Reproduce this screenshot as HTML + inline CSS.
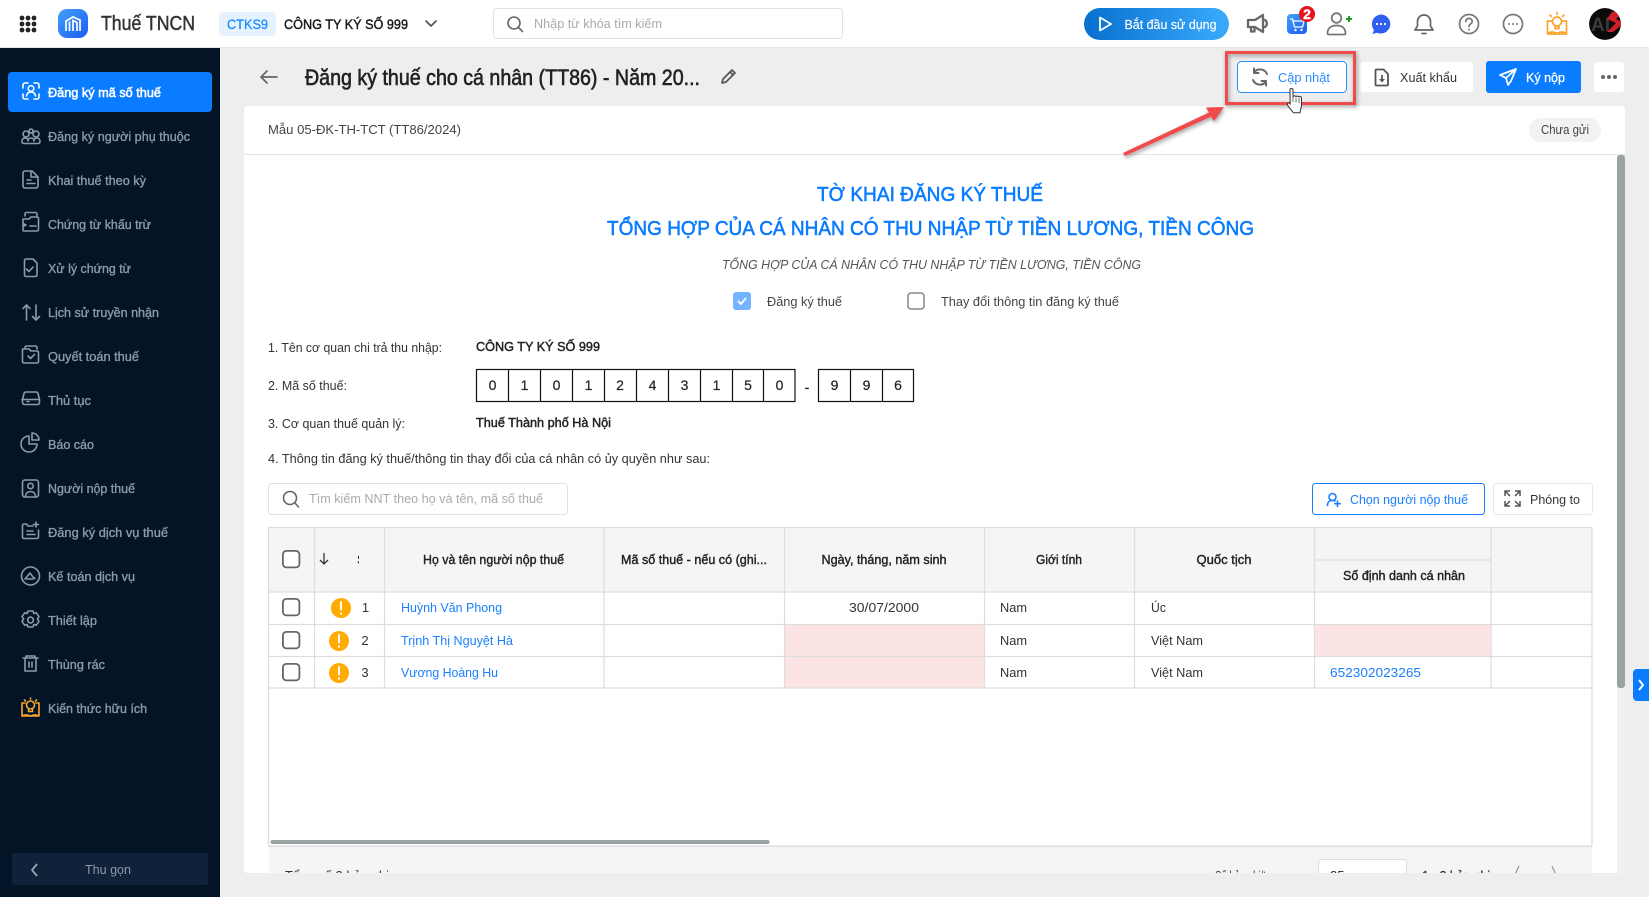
<!DOCTYPE html>
<html lang="vi">
<head>
<meta charset="utf-8">
<title>Đăng ký thuế</title>
<style>
html,body{margin:0;padding:0;width:1649px;height:897px;overflow:hidden;background:#eee}
svg{display:block;position:absolute;left:0;top:0;filter:blur(.3px)}
text{font-family:"Liberation Sans",sans-serif;font-size:13px;white-space:pre}
.s text{fill:#8f99a8;stroke:#8f99a8;stroke-width:.35px}
.i{fill:none;stroke:#8f99a8;stroke-width:1.6;stroke-linecap:round;stroke-linejoin:round}
.h text{fill:#222;stroke:#222;stroke-width:.4px}
.d text{fill:#333}
.l text{fill:#1a7fff}
.b{fill:none;stroke:#ddd;stroke-width:1.2}
.n text{font-size:14px;fill:#222;text-anchor:middle;stroke:#222;stroke-width:.2px}
.n rect{fill:none;stroke:#111;stroke-width:1.2}
.cb{fill:#fff;stroke:#666;stroke-width:1.8}
.sh{filter:drop-shadow(1px 2px 2px rgba(0,0,0,.4))}
</style>
</head>
<body>
<svg width="1649" height="897" viewBox="0 0 1649 897" xmlns="http://www.w3.org/2000/svg">
<defs>
<linearGradient id="gs" x1="0" x2="1" y1="0" y2="0"><stop offset="0" stop-color="#0870cf"/><stop offset="1" stop-color="#3aaafc"/></linearGradient>
<linearGradient id="gl" x1="0" x2="1" y1="0" y2="1"><stop offset="0" stop-color="#42a0f8"/><stop offset="1" stop-color="#1a5cf5"/></linearGradient>
<clipPath id="cf"><rect x="244" y="846" width="1381" height="27"/></clipPath>
<clipPath id="cS"><rect x="345" y="540" width="14" height="40"/></clipPath>
<clipPath id="cA"><circle cx="1605" cy="24" r="16"/></clipPath>
</defs>

<rect width="1649" height="897" fill="#eee"/>

<!-- top bar -->
<rect width="1649" height="47" fill="#fff"/>
<rect y="47" width="1649" height="1" fill="#e6e6e6"/>
<g fill="#222">
<circle cx="22" cy="18" r="2.4"/><circle cx="28" cy="18" r="2.4"/><circle cx="34" cy="18" r="2.4"/>
<circle cx="22" cy="24" r="2.4"/><circle cx="28" cy="24" r="2.4"/><circle cx="34" cy="24" r="2.4"/>
<circle cx="22" cy="30" r="2.4"/><circle cx="28" cy="30" r="2.4"/><circle cx="34" cy="30" r="2.4"/>
</g>
<rect x="58" y="9" width="30" height="29" rx="9" fill="url(#gl)"/>
<path d="M66 31V21l7-4 7 3v11M69.500 31V21.500M73 31V20.500l4 2V31" fill="none" stroke="#fff" stroke-width="1.700"/>
<text x="101" y="30" textLength="94" lengthAdjust="spacingAndGlyphs" fill="#333" stroke="#333" stroke-width=".45" style="font-size:20px">Thuế TNCN</text>
<rect x="219" y="12" width="57" height="24" rx="4" fill="#e6f2fd"/>
<text x="227" y="29" textLength="41" lengthAdjust="spacingAndGlyphs" fill="#1a8cff" stroke="#1a8cff" stroke-width=".3" style="font-size:14px">CTKS9</text>
<text x="284" y="29" textLength="124" lengthAdjust="spacingAndGlyphs" fill="#1a1a1a" stroke="#1a1a1a" stroke-width=".45" style="font-size:14px">CÔNG TY KÝ SỐ 999</text>
<path d="M426 21l5 5 5-5" fill="none" stroke="#555" stroke-width="1.700" stroke-linecap="round" stroke-linejoin="round"/>
<rect x="493.500" y="8.500" width="349" height="30" rx="3" fill="#fff" stroke="#e2e2e2"/>
<circle cx="514" cy="23" r="6" fill="none" stroke="#666" stroke-width="1.600"/><path d="M518.500 27.500l4 4" stroke="#666" stroke-width="1.600" stroke-linecap="round"/>
<text x="534" y="28" textLength="128" lengthAdjust="spacingAndGlyphs" fill="#aaa">Nhập từ khóa tìm kiếm</text>

<rect x="1084" y="8" width="145" height="32" rx="16" fill="url(#gs)"/>
<path d="M1100 17.500v13l11-6.500z" fill="none" stroke="#fff" stroke-width="1.800" stroke-linejoin="round"/>
<text x="1124.500" y="29" textLength="92" lengthAdjust="spacingAndGlyphs" fill="#fff" stroke="#fff" stroke-width=".15">Bắt đầu sử dụng</text>

<!-- megaphone -->
<path d="M1248 20h7l8-5v17l-8-5h-7zM1251 27v4.500h3.500V27M1265 20c2.500 1.500 2.500 5.500 0 7" fill="none" stroke="#666" stroke-width="2.300" stroke-linejoin="round" stroke-linecap="round"/>
<!-- cart -->
<rect x="1287" y="14" width="20" height="20" rx="4" fill="url(#gl)"/>
<path d="M1290 19h2.500l2 8h8l1.500-6h-11" fill="none" stroke="#fff" stroke-width="1.300"/><circle cx="1295.500" cy="30" r="1.200" fill="#fff"/><circle cx="1301.500" cy="30" r="1.200" fill="#fff"/>
<circle cx="1307" cy="14" r="8" fill="#e8121f"/>
<text x="1307" y="19" text-anchor="middle" fill="#fff" stroke="#fff" stroke-width=".4" style="font-size:14px;font-weight:bold">2</text>
<!-- add user -->
<circle cx="1336.500" cy="18" r="4.800" fill="none" stroke="#777" stroke-width="1.800"/>
<path d="M1327.500 33.500c0-5 3-8 9-8s9 3 9 8c0 .5-.5 1-1 1h-16c-.5 0-1-.5-1-1z" fill="none" stroke="#777" stroke-width="1.800"/>
<path d="M1346 19h6M1349 16v6" stroke="#1f9d1f" stroke-width="2"/>
<!-- chat -->
<path d="M1381 14.500a9.500 9.500 0 1 1-4 18.200l-4.500 1.300 1.500-4a9.500 9.500 0 0 1 7-15.500z" fill="#2f5ff0"/>
<circle cx="1377" cy="24" r="1.100" fill="#fff"/><circle cx="1381" cy="24" r="1.100" fill="#fff"/><circle cx="1385" cy="24" r="1.100" fill="#fff"/>
<!-- bell -->
<path d="M1424 15c-4.500 0-6.500 3.500-6.500 7v4l-2.500 4h18l-2.500-4v-4c0-3.500-2-7-6.500-7z" fill="none" stroke="#666" stroke-width="1.700" stroke-linejoin="round"/>
<path d="M1422 33.500h4" stroke="#666" stroke-width="1.700" stroke-linecap="round"/>
<!-- help -->
<circle cx="1469" cy="24" r="9.500" fill="none" stroke="#777" stroke-width="1.700"/>
<path d="M1465.800 21.500c0-4.200 6.400-4.200 6.400 0 0 2.500-3.200 2.500-3.200 5" fill="none" stroke="#777" stroke-width="1.700" stroke-linecap="round"/><circle cx="1469" cy="29.500" r="1" fill="#777"/>
<!-- dots -->
<circle cx="1513" cy="24" r="9.500" fill="none" stroke="#777" stroke-width="1.700"/>
<circle cx="1509" cy="24" r="1" fill="#777"/><circle cx="1513" cy="24" r="1" fill="#777"/><circle cx="1517" cy="24" r="1" fill="#777"/>
<!-- bulb -->
<g fill="none" stroke="#f9a52e" stroke-width="1.700" stroke-linecap="round" stroke-linejoin="round">
<circle cx="1557" cy="21.500" r="4.500"/><path d="M1555 26v2.500h4V26M1557 12.500v2M1550 15l1.500 1.500M1564 15l-1.500 1.500"/>
<path d="M1551.500 21h-4v13h19V21h-4M1547.500 33.500c3-2 6-2 9.500 0 3.500-2 6.500-2 9.500 0"/>
</g>
<!-- avatar -->
<g clip-path="url(#cA)">
<circle cx="1605" cy="24" r="16" fill="#0b0b0b"/>
<text x="1591" y="31" fill="#3a3a3a" style="font-size:19px;font-weight:bold">AI</text>
<path d="M1622 12h-10l-5 7 9 4-9 9h6l11-9-8-4 6-5z" fill="#d11f2a"/>
</g>

<!-- sidebar -->
<rect y="48" width="220" height="849" fill="#031426"/>
<rect x="8" y="72" width="204" height="40" rx="4" fill="#0a7cff"/>
<g fill="none" stroke="#fff" stroke-width="1.600" stroke-linecap="round">
<path d="M23 88v-3a2 2 0 0 1 2-2h3M34 83h3a2 2 0 0 1 2 2v3M39 94v3a2 2 0 0 1-2 2h-3M28 99h-3a2 2 0 0 1-2-2v-3"/>
<circle cx="31" cy="88.500" r="2.800"/><path d="M26.500 96c.5-3 2-4 4.500-4s4 1 4.500 4"/>
</g>
<text x="48" y="97" textLength="113" lengthAdjust="spacingAndGlyphs" fill="#fff" stroke="#fff" stroke-width=".55">Đăng ký mã số thuế</text>

<g class="s">
<text x="48" y="141" textLength="142" lengthAdjust="spacingAndGlyphs">Đăng ký người phụ thuộc</text>
<text x="48" y="185" textLength="98" lengthAdjust="spacingAndGlyphs">Khai thuế theo kỳ</text>
<text x="48" y="229" textLength="103" lengthAdjust="spacingAndGlyphs">Chứng từ khấu trừ</text>
<text x="48" y="273" textLength="83" lengthAdjust="spacingAndGlyphs">Xử lý chứng từ</text>
<text x="48" y="317" textLength="111" lengthAdjust="spacingAndGlyphs">Lịch sử truyền nhận</text>
<text x="48" y="361" textLength="91" lengthAdjust="spacingAndGlyphs">Quyết toán thuế</text>
<text x="48" y="405" textLength="43" lengthAdjust="spacingAndGlyphs">Thủ tục</text>
<text x="48" y="449" textLength="46" lengthAdjust="spacingAndGlyphs">Báo cáo</text>
<text x="48" y="493" textLength="87" lengthAdjust="spacingAndGlyphs">Người nộp thuế</text>
<text x="48" y="537" textLength="120" lengthAdjust="spacingAndGlyphs">Đăng ký dịch vụ thuế</text>
<text x="48" y="581" textLength="87" lengthAdjust="spacingAndGlyphs">Kế toán dịch vụ</text>
<text x="48" y="625" textLength="49" lengthAdjust="spacingAndGlyphs">Thiết lập</text>
<text x="48" y="669" textLength="57" lengthAdjust="spacingAndGlyphs">Thùng rác</text>
<text x="48" y="713" textLength="99" lengthAdjust="spacingAndGlyphs">Kiến thức hữu ích</text>
</g>
<g class="i">
<circle cx="26" cy="134" r="3"/><circle cx="36" cy="134" r="3"/><circle cx="31" cy="131" r="2"/><path d="M22 142c0-3 1-4 3-4s3 1 3 3c0-2 1-3 3-3s3 1 3 3c0-2 1-3 3-3s3 1 3 4c0 1-1 1.500-2 1.500H24c-1 0-2-.5-2-1.500z"/>
<path d="M25 171h7l6 6v9a2 2 0 0 1-2 2H25a2 2 0 0 1-2-2v-13a2 2 0 0 1 2-2zM27 180h4M27 183.500h8M31 172v5h6"/>
<path d="M25 216v-2a1.500 1.500 0 0 1 1.500-1.500h9a1.500 1.500 0 0 1 1.500 1.500v2M24 231h13a1.500 1.500 0 0 0 1.500-1.500v-11a1.500 1.500 0 0 0-1.500-1.500H31l-2 2h-6v11a1 1 0 0 0 1 1zM30 226h6M23 223.500l3 1.500-3 1.500"/>
<path d="M26 259h7l4 4v12a1.500 1.500 0 0 1-1.500 1.500h-9.500a1.500 1.500 0 0 1-1.500-1.500v-14.500a1.500 1.500 0 0 1 1.500-1.500zM26.500 269l2.500 2.500 4-4.500"/>
<path d="M26.500 320v-15M23 308.500l3.500-3.500 3.500 3.500M36 305v15M32.500 316.500l3.500 3.500 3.500-3.500"/>
<path d="M25 349v-1.500a1.500 1.500 0 0 1 1.500-1.500h9a1.500 1.500 0 0 1 1.500 1.500v1.500M24 363h13a1.500 1.500 0 0 0 1.500-1.500v-9a1.500 1.500 0 0 0-1.500-1.500H31l-2-2h-6.500v12.500a1.500 1.500 0 0 0 1.500 1.500zM28 356l2.500 2.500 4-4"/>
<path d="M27 392h9c1 0 1.700.5 2 1.500l1.500 6v3a2 2 0 0 1-2 2h-13a2 2 0 0 1-2-2v-3l1.500-6c.3-1 1-1.500 2-1.500zM22 399.500h17.500M27 401.500h2"/>
<path d="M37 444a8 8 0 1 1-8-8v8z"/><path d="M32 433a7 7 0 0 1 7 7h-7z"/>
<path d="M25 480h11a2.500 2.500 0 0 1 2.500 2.500v12a2.500 2.500 0 0 1-2.500 2.500H25a2.500 2.500 0 0 1-2.500-2.500v-12a2.500 2.500 0 0 1 2.500-2.500z"/><circle cx="30.500" cy="486" r="2.700"/><path d="M25.500 496c.5-3 2-4.500 5-4.500s4.500 1.500 5 4.500"/>
<path d="M33 526h-5l-1.500-2H24a1.500 1.500 0 0 0-1.500 1.500V537a1.500 1.500 0 0 0 1.500 1.500h13a1.500 1.500 0 0 0 1.500-1.500v-7M27 531h6M27 534.500h8M36 522v5M33.500 524.500h5"/>
<circle cx="30.500" cy="576" r="9"/><path d="M25 579l5-6 3 4 2 1.500M27 579h6"/>
<path d="M28 611h5l.8 2.500 2.400-.8 2.800 4-1.600 2.300 1.600 2.300-2.800 4-2.400-.8-.8 2.500h-5l-.8-2.500-2.400.8-2.800-4 1.600-2.300-1.600-2.300 2.800-4 2.400.8z"/><circle cx="30.500" cy="620" r="2.900"/>
<path d="M23 658h15M26 658v-2h9v2M25 658v13h11v-13M29 662v5M32 662v5"/>
</g>
<g fill="none" stroke="#f9a52e" stroke-width="1.600" stroke-linecap="round" stroke-linejoin="round">
<circle cx="30.500" cy="705" r="4"/><path d="M28.500 709.500v2h4v-2M30.500 698v1M24.500 700l1 1M36.500 700l-1 1"/>
<path d="M25 703h-3v13h17v-13h-3M22 716c3-1.500 5-1.500 8.500 0 3.500-1.500 5.500-1.500 8.500 0"/>
</g>
<rect x="12" y="853" width="196" height="32" rx="3" fill="#10213a"/>
<path d="M37 864l-5 6 5 6" fill="none" stroke="#9aa3af" stroke-width="1.800"/>
<text x="85" y="874" textLength="46" lengthAdjust="spacingAndGlyphs" fill="#8f99a8">Thu gọn</text>

<!-- page header -->
<path d="M277 77h-16M267 71l-6 6 6 6" fill="none" stroke="#666" stroke-width="1.700" stroke-linecap="round" stroke-linejoin="round"/>
<text x="305" y="85" textLength="395" lengthAdjust="spacingAndGlyphs" fill="#222" stroke="#222" stroke-width=".6" style="font-size:22px">Đăng ký thuế cho cá nhân (TT86) - Năm 20...</text>
<path d="M722 83l1-4 9-9 3 3-9 9zM730 72l3 3" fill="none" stroke="#555" stroke-width="1.700" stroke-linejoin="round"/>

<rect x="1237.500" y="61.500" width="109" height="31" rx="4" fill="#fff" stroke="#2b8cff"/>
<g fill="none" stroke="#666" stroke-width="2" stroke-linecap="round" stroke-linejoin="round">
<path d="M1267 74a7.500 7.500 0 0 0-13-1.500M1253 80a7.500 7.500 0 0 0 13 1.500"/><path d="M1254 68.500v4.500h4.500M1266 85.500V81h-4.500"/>
</g>
<text x="1278" y="82" textLength="52" lengthAdjust="spacingAndGlyphs" fill="#2b8cff">Cập nhật</text>

<rect x="1360.500" y="62" width="112.500" height="30" rx="3" fill="#fff"/>
<path d="M1376.500 69.500h7l4.500 4.500v10.500a1 1 0 0 1-1 1h-10.500a1 1 0 0 1-1-1V70.500a1 1 0 0 1 1-1z" fill="none" stroke="#555" stroke-width="1.800" stroke-linejoin="round"/>
<path d="M1382 75v5" stroke="#555" stroke-width="1.800" fill="none"/><path d="M1379 79h6l-3 3.500z" fill="#555"/>
<text x="1400" y="82" textLength="57" lengthAdjust="spacingAndGlyphs" fill="#333">Xuất khẩu</text>

<rect x="1486" y="61" width="95" height="32" rx="3" fill="#0a7cff"/>
<path d="M1516 69l-16 6 6 3 2 7 3-4zM1516 69l-10 9" fill="none" stroke="#fff" stroke-width="1.800" stroke-linejoin="round"/>
<text x="1526" y="82" textLength="39" lengthAdjust="spacingAndGlyphs" fill="#fff" stroke="#fff" stroke-width=".3">Ký nộp</text>

<rect x="1594" y="62" width="30" height="30" rx="3" fill="#fff"/>
<circle cx="1603" cy="77" r="2" fill="#666"/><circle cx="1609" cy="77" r="2" fill="#666"/><circle cx="1615" cy="77" r="2" fill="#666"/>

<!-- card -->
<rect x="244" y="106" width="1381" height="767" rx="4" fill="#fff"/>
<rect x="1617" y="155" width="8" height="718" fill="#f1f1f1"/>
<rect x="244" y="154" width="1381" height="1" fill="#e4e4e4"/>
<text x="268" y="134" textLength="193" lengthAdjust="spacingAndGlyphs" fill="#444">Mẫu 05-ĐK-TH-TCT (TT86/2024)</text>
<rect x="1529" y="118" width="72" height="24" rx="12" fill="#f2f2f2"/>
<text x="1541" y="134" textLength="48" lengthAdjust="spacingAndGlyphs" fill="#444">Chưa gửi</text>
<rect x="1617" y="155" width="8" height="533" rx="3" fill="#9aa3a3"/>

<text x="817" y="201" textLength="226" lengthAdjust="spacingAndGlyphs" fill="#0a7cff" stroke="#0a7cff" stroke-width=".55" style="font-size:20px">TỜ KHAI ĐĂNG KÝ THUẾ</text>
<text x="607" y="235" textLength="647" lengthAdjust="spacingAndGlyphs" fill="#0a7cff" stroke="#0a7cff" stroke-width=".55" style="font-size:20px">TỔNG HỢP CỦA CÁ NHÂN CÓ THU NHẬP TỪ TIỀN LƯƠNG, TIỀN CÔNG</text>
<text x="722" y="269" textLength="419" lengthAdjust="spacingAndGlyphs" fill="#555" style="font-style:italic">TỔNG HỢP CỦA CÁ NHÂN CÓ THU NHẬP TỪ TIỀN LƯƠNG, TIỀN CÔNG</text>

<rect x="733" y="292" width="18" height="18" rx="3" fill="#73b3ff"/>
<path d="M738 301l3 3 5-6" fill="none" stroke="#fff" stroke-width="1.800"/>
<text x="767" y="306" textLength="75" lengthAdjust="spacingAndGlyphs" fill="#444">Đăng ký thuế</text>
<rect x="908" y="293" width="16" height="16" rx="3" fill="#fff" stroke="#999" stroke-width="1.800"/>
<text x="941" y="306" textLength="178" lengthAdjust="spacingAndGlyphs" fill="#444">Thay đổi thông tin đăng ký thuế</text>

<g class="d">
<text x="268" y="352" textLength="174" lengthAdjust="spacingAndGlyphs">1. Tên cơ quan chi trả thu nhập:</text>
<text x="268" y="390" textLength="79" lengthAdjust="spacingAndGlyphs">2. Mã số thuế:</text>
<text x="268" y="428" textLength="137" lengthAdjust="spacingAndGlyphs">3. Cơ quan thuế quản lý:</text>
<text x="268" y="463" textLength="442" lengthAdjust="spacingAndGlyphs">4. Thông tin đăng ký thuế/thông tin thay đổi của cá nhân có ủy quyền như sau:</text>
</g>
<text x="476" y="351" textLength="124" lengthAdjust="spacingAndGlyphs" fill="#222" stroke="#222" stroke-width=".45">CÔNG TY KÝ SỐ 999</text>
<text x="476" y="427" textLength="135" lengthAdjust="spacingAndGlyphs" fill="#222" stroke="#222" stroke-width=".45">Thuế Thành phố Hà Nội</text>

<g class="n">
<rect x="476.500" y="369.500" width="318.500" height="32"/>
<path d="M508.500 369.500v32M540.500 369.500v32M572.500 369.500v32M604.500 369.500v32M636.500 369.500v32M668.500 369.500v32M700.500 369.500v32M732.500 369.500v32M763.500 369.500v32M850.500 369.500v32M882.500 369.500v32" stroke="#111" stroke-width="1.200" fill="none"/>
<text x="492.500" y="390">0</text><text x="524.500" y="390">1</text><text x="556.500" y="390">0</text><text x="588.500" y="390">1</text><text x="620" y="390">2</text><text x="652.500" y="390">4</text><text x="684.500" y="390">3</text><text x="716.500" y="390">1</text><text x="748" y="390">5</text><text x="779.500" y="390">0</text>
<text x="807" y="392">-</text>
<rect x="818.500" y="369.500" width="95" height="32"/>
<text x="834.500" y="390">9</text><text x="866.500" y="390">9</text><text x="898" y="390">6</text>
</g>

<rect x="268.500" y="483.500" width="299" height="31" rx="3" fill="#fff" stroke="#e2e2e2"/>
<circle cx="290" cy="498" r="6.500" fill="none" stroke="#666" stroke-width="1.600"/><path d="M295 503l3.500 4" stroke="#666" stroke-width="1.600" stroke-linecap="round"/>
<text x="309" y="503" textLength="234" lengthAdjust="spacingAndGlyphs" fill="#aaa">Tìm kiếm NNT theo họ và tên, mã số thuế</text>

<rect x="1312.500" y="483.500" width="172" height="31" rx="3" fill="#fff" stroke="#1a7fff"/>
<g fill="none" stroke="#1a7fff" stroke-width="1.600" stroke-linecap="round" stroke-linejoin="round">
<circle cx="1332.500" cy="497" r="3.500"/><path d="M1327.500 505.500c0-3.500 1.500-5 5-5 1 0 2 .2 2.500.5M1337.500 501v5.500M1334.800 503.700h5.400"/>
</g>
<text x="1350" y="504" textLength="118" lengthAdjust="spacingAndGlyphs" fill="#1a7fff">Chọn người nộp thuế</text>
<rect x="1493.500" y="483.500" width="99" height="31" rx="3" fill="#fff" stroke="#e6e6e6"/>
<path d="M1505 496v-5h5M1505 491l5 5M1515 491h5v5M1520 491l-5 5M1505 501v5h5M1505 506l5-5M1515 506h5v-5M1520 506l-5-5" fill="none" stroke="#555" stroke-width="1.500"/>
<text x="1530" y="504" textLength="50" lengthAdjust="spacingAndGlyphs" fill="#333">Phóng to</text>

<!-- table -->
<rect x="268.500" y="527" width="1323.500" height="65" fill="#f4f5f7"/>
<rect x="784.500" y="624.500" width="200" height="63.500" fill="#fce4e4"/>
<rect x="1314.500" y="624.500" width="176.500" height="32" fill="#fce4e4"/>
<path class="b" d="M268.500 527V846M1592 527V846M268.500 527.500H1592M268.500 592H1592M268.500 624.500H1592M268.500 656.500H1592M268.500 688H1592M1314.500 560H1491"/>
<path class="b" d="M314.500 527V688M384.500 527V688M604 527V688M784.500 527V688M984.500 527V688M1134.500 527V688M1314.500 527V688M1491 527V688"/>

<rect x="282.900" y="550.900" width="16.500" height="16.500" rx="3.500" class="cb"/>
<rect x="282.900" y="598.900" width="16.500" height="16.500" rx="3.500" class="cb"/>
<rect x="282.900" y="631.900" width="16.500" height="16.500" rx="3.500" class="cb"/>
<rect x="282.900" y="663.900" width="16.500" height="16.500" rx="3.500" class="cb"/>
<path d="M324 553v11M320 560l4 4 4-4" fill="none" stroke="#333" stroke-width="1.300"/>
<g clip-path="url(#cS)"><text x="357" y="564" fill="#222" stroke="#222" stroke-width=".25">STT</text></g>

<g class="h">
<text x="423" y="564" textLength="141" lengthAdjust="spacingAndGlyphs">Họ và tên người nộp thuế</text>
<text x="621" y="564" textLength="146" lengthAdjust="spacingAndGlyphs">Mã số thuế - nếu có (ghi...</text>
<text x="821.500" y="564" textLength="125" lengthAdjust="spacingAndGlyphs">Ngày, tháng, năm sinh</text>
<text x="1036" y="564" textLength="46" lengthAdjust="spacingAndGlyphs">Giới tính</text>
<text x="1196.500" y="564" textLength="55" lengthAdjust="spacingAndGlyphs">Quốc tịch</text>
<text x="1343" y="580" textLength="122" lengthAdjust="spacingAndGlyphs">Số định danh cá nhân</text>
</g>

<g fill="#ffab00"><circle cx="341" cy="608" r="10"/><circle cx="339" cy="641" r="10"/><circle cx="339" cy="673" r="10"/></g>
<g stroke="#fff" stroke-width="2" stroke-linecap="round" fill="none"><path d="M341 602v7.500M341 613.500v.3M339 635v7.500M339 646.500v.3M339 667v7.500M339 678.500v.3"/></g>
<g class="d">
<text x="365.500" y="612" text-anchor="middle">1</text>
<text x="365" y="645" text-anchor="middle">2</text>
<text x="365" y="677" text-anchor="middle">3</text>
</g>
<g class="l">
<text x="401" y="612" textLength="101" lengthAdjust="spacingAndGlyphs">Huỳnh Văn Phong</text>
<text x="401" y="645" textLength="112" lengthAdjust="spacingAndGlyphs">Trịnh Thị Nguyệt Hà</text>
<text x="401" y="677" textLength="97" lengthAdjust="spacingAndGlyphs">Vương Hoàng Hu</text>
<text x="1330" y="677" textLength="91" lengthAdjust="spacingAndGlyphs">652302023265</text>
</g>
<g class="d">
<text x="849" y="612" textLength="70" lengthAdjust="spacingAndGlyphs">30/07/2000</text>
<text x="1000" y="612" textLength="27" lengthAdjust="spacingAndGlyphs">Nam</text>
<text x="1000" y="645" textLength="27" lengthAdjust="spacingAndGlyphs">Nam</text>
<text x="1000" y="677" textLength="27" lengthAdjust="spacingAndGlyphs">Nam</text>
<text x="1151" y="612" textLength="15" lengthAdjust="spacingAndGlyphs">Úc</text>
<text x="1151" y="645" textLength="52" lengthAdjust="spacingAndGlyphs">Việt Nam</text>
<text x="1151" y="677" textLength="52" lengthAdjust="spacingAndGlyphs">Việt Nam</text>
</g>

<rect x="270.500" y="840" width="499" height="4" rx="2" fill="#9aa3a3"/>
<rect x="268" y="845.500" width="1324" height="1.500" fill="#ddd"/>

<g clip-path="url(#cf)">
<rect x="269" y="847" width="1323" height="30" fill="#f4f5f7"/>
<text x="285" y="880" textLength="104" lengthAdjust="spacingAndGlyphs" fill="#333">Tổng số 3 bản ghi</text>
<text x="1215" y="880" textLength="70" lengthAdjust="spacingAndGlyphs" fill="#333">Số bản ghi/trang</text>
<rect x="1318.500" y="859.500" width="88" height="30" rx="3" fill="#fff" stroke="#ddd"/>
<text x="1330" y="880" fill="#333">25</text>
<path d="M1385 878l4 4 4-4" fill="none" stroke="#555"/>
<text x="1422" y="880" textLength="68" lengthAdjust="spacingAndGlyphs" fill="#333" stroke="#333" stroke-width=".3">1 - 3 bản ghi</text>
<path d="M1519 866l-5 11M1552 866l5 11" fill="none" stroke="#999" stroke-width="1.300"/>
</g>

<!-- side tab -->
<rect x="1633" y="669" width="20" height="32" rx="4" fill="#0a7cff"/>
<path d="M1639 680l4 5-4 5" fill="none" stroke="#fff" stroke-width="2"/>

<!-- annotation -->
<g class="sh">
<rect x="1226.500" y="52.500" width="128" height="51" fill="none" stroke="#f04a4a" stroke-width="3"/>
<path d="M1123 153L1209 112.500L1206 107.500L1224 107L1214 121L1211 116.500L1125 156z" fill="#f04a4a"/>
</g>

<!-- hand cursor -->
<path d="M1290 90c0-2 3-2 3 0v7c0-1.500 3-1.500 3 0 0-1.200 3-1.200 3 .3 0-1 2.500-1 2.500.5v7c0 3-1.500 6-1.500 8h-6.500c-2-3-5.500-6-6-8s1.500-2.500 2.700-1z" fill="#fff" stroke="#333" stroke-width="1"/>
<path d="M1293 97v5M1296 97.500v5M1299 98v5" stroke="#333" stroke-width=".7" fill="none"/>
</svg>
</body>
</html>
